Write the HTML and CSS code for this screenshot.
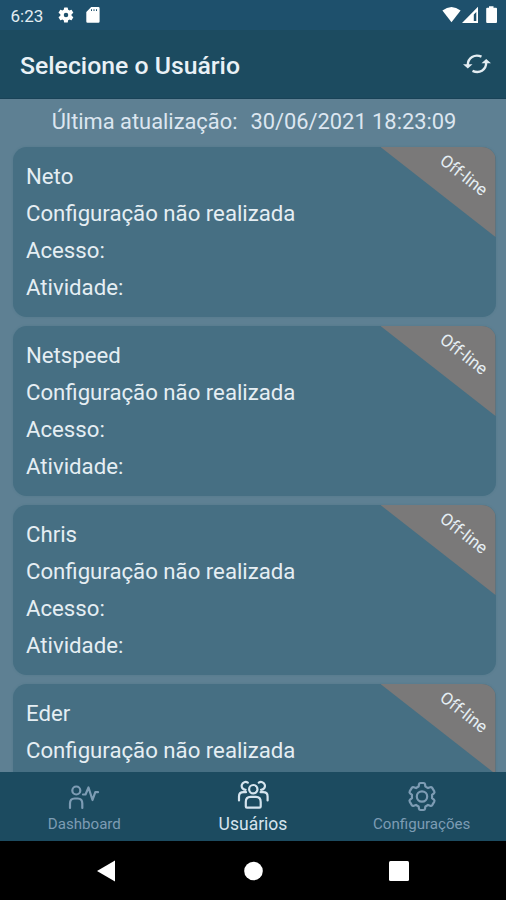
FILE: index.html
```html
<!DOCTYPE html>
<html lang="pt-BR">
<head>
<meta charset="utf-8">
<title>Selecione o Usuário</title>
<link rel="stylesheet" href="styles.css">
</head>
<body>
<div class="screen">
  <div class="status">
    <span class="clock">6:23</span>
    <svg class="status-gear" width="18" height="18" viewBox="0 0 24 24"><path fill="#fff" fill-rule="evenodd" d="M19.400 13a7.500 7.500 0 0 0 0-2l2.100-1.600a.5.5 0 0 0 .1-.7l-2-3.400a.5.5 0 0 0-.6-.2l-2.500 1a7.300 7.300 0 0 0-1.700-1l-.4-2.600a.5.5 0 0 0-.5-.5h-4a.5.5 0 0 0-.5.5L9 5.100a7.300 7.300 0 0 0-1.700 1l-2.500-1a.5.5 0 0 0-.6.2l-2 3.400a.5.5 0 0 0 .1.700L4.500 11a7.500 7.500 0 0 0 0 2l-2.200 1.600a.5.5 0 0 0-.1.700l2 3.400a.5.5 0 0 0 .6.200l2.500-1a7.300 7.300 0 0 0 1.700 1l.4 2.600c0 .3.2.5.500.5h4c.3 0 .5-.2.500-.5l.4-2.600a7.300 7.300 0 0 0 1.700-1l2.500 1a.5.5 0 0 0 .6-.2l2-3.400a.5.5 0 0 0-.1-.7zM12 15a3 3 0 1 1 0-6 3 3 0 0 1 0 6z"/></svg>
    <svg class="sd" width="14" height="16" viewBox="0 0 14 16"><path fill="#fff" fill-rule="evenodd" d="M5.200 0H12.400Q13.600 0 13.600 1.200V14.500Q13.600 15.700 12.400 15.700H1.500Q.3 15.700 .3 14.500V5zM5 2.200V4H6V2.200zM7.500 2.200V4H8.500V2.200zM10 2.200V4H11V2.200z"/></svg>
    <svg class="signals" width="56" height="18" viewBox="0 0 56 18"><path fill="#fff" d="M.4 4.500Q9.500-2.500 18.600 4.500L9.500 16.200z"/><path fill="#fff" fill-rule="evenodd" d="M36 .8V17H20zM34.300 6V15H31.800V8.500z"/><path fill="#fff" d="M47 .3h4.500v1.500H54q1 0 1 1V16q0 1-1 1h-8.800q-1 0-1-1V2.800q0-1 1-1H47z"/></svg>
  </div>
  <header class="appbar">
    <h1>Selecione o Usuário</h1>
    <svg width="28" height="20" viewBox="0 0 28 20"><g fill="none" stroke="#e3edf2" stroke-width="2.400"><path d="M4.800 11C4.800 4 11.500-.5 18.500 2.700"/><path d="M23.200 8.500C23.200 16 16.500 20 9.500 16.800"/></g><path fill="#e3edf2" d="M0 10.200H9.500L4.800 14.600zM18.500 9.300H28L23.200 4.900z"/></svg>
  </header>
  <main>
    <div class="updated"><span>Última atualização:</span><span>30/06/2021 18:23:09</span></div>
    <section class="card"><div class="ribbon"><span>Off-line</span></div><p>Neto</p><p>Configuração não realizada</p><p>Acesso:</p><p>Atividade:</p></section>
    <section class="card"><div class="ribbon"><span>Off-line</span></div><p>Netspeed</p><p>Configuração não realizada</p><p>Acesso:</p><p>Atividade:</p></section>
    <section class="card"><div class="ribbon"><span>Off-line</span></div><p>Chris</p><p>Configuração não realizada</p><p>Acesso:</p><p>Atividade:</p></section>
    <section class="card"><div class="ribbon"><span>Off-line</span></div><p>Eder</p><p>Configuração não realizada</p><p>Acesso:</p><p>Atividade:</p></section>
  </main>
  <nav class="tabs">
    <div class="tab">
      <svg width="32" height="32" viewBox="0 0 32 32" fill="none" stroke="currentColor" stroke-width="2.200" stroke-linecap="round" stroke-linejoin="round"><circle cx="8.300" cy="10.500" r="4"/><path d="M2 28V23.500Q2 18.500 6.500 18.500H9.800Q14.300 18.500 14.300 23.500V28M15 14.500H17.500L20.500 7.500L24.500 20L27.300 12.200H30"/></svg>
      <span>Dashboard</span>
    </div>
    <div class="tab active">
      <svg width="32" height="32" viewBox="0 0 32 32" fill="none" stroke="currentColor" stroke-width="2.200" stroke-linecap="round" stroke-linejoin="round"><circle cx="16.300" cy="9.200" r="4.200"/><path d="M8.800 26.500V22Q8.800 16.800 13.500 16.800H19Q23.700 16.800 23.700 22V26.500Q23.700 27.700 22.500 27.700H10Q8.800 27.700 8.800 26.500zM10.800 2.700A3.900 3.900 0 1 0 8.600 9.800M21.800 2.700A3.900 3.900 0 1 1 24 9.800M2 20.500V16.500Q2 12.200 6.500 12.200H9M30.600 20.500V16.500Q30.600 12.200 26.100 12.200H23.600"/></svg>
      <span>Usuários</span>
    </div>
    <div class="tab">
      <svg width="32" height="32" viewBox="0 0 32 32" fill="none" stroke="currentColor" stroke-width="2.200" stroke-linejoin="round"><circle cx="16" cy="16.500" r="5.200"/><path d="M14.400 3H17.600Q18.800 3 19 4.200L19.400 6.500Q20.700 7.500 22 8.100L24.200 7.200Q25.500 6.800 26.200 7.900L28.300 11.400Q28.900 12.600 27.900 13.400L26 14.900Q26.200 16.500 26 18.100L27.900 19.600Q28.900 20.400 28.300 21.600L26.200 25.100Q25.500 26.200 24.200 25.800L22 24.900Q20.700 25.900 19.400 26.500L19 28.800Q18.800 30 17.600 30H14.400Q13.200 30 13 28.800L12.600 26.500Q11.300 25.900 10 24.900L7.800 25.800Q6.500 26.200 5.800 25.100L3.700 21.600Q3.100 20.400 4.100 19.600L6 18.100Q5.800 16.500 6 14.900L4.100 13.400Q3.100 12.600 3.700 11.400L5.800 7.900Q6.500 6.800 7.800 7.200L10 8.100Q11.300 7.100 12.600 6.500L13 4.200Q13.200 3 14.400 3z"/></svg>
      <span>Configurações</span>
    </div>
  </nav>
  <div class="sysnav">
    <svg width="20" height="22" viewBox="0 0 20 22"><path fill="#fff" d="M19 .5V21.500L1 11z"/></svg>
    <svg width="20" height="20" viewBox="0 0 20 20"><circle cx="10.500" cy="10" r="9.300" fill="#fff"/></svg>
    <svg width="20" height="20" viewBox="0 0 20 20"><rect width="20" height="20" rx="1.500" fill="#fff"/></svg>
  </div>
</div>
</body>
</html>
```

FILE: styles.css
```css
* { box-sizing: border-box; }
body { margin: 0; font-family: Roboto, "Liberation Sans", sans-serif; }
h1, p { margin: 0; }
svg { display: block; flex: none; }
.screen { width: 506px; height: 900px; display: flex; flex-direction: column; overflow: hidden; background: #5e8093; }
.status { flex: none; height: 30px; display: flex; align-items: center; padding: 0 8px 0 10.500px; background: #1e506c; color: #e3edf2; }
.clock { font-size: 17px; line-height: 30px; width: 46.500px; padding-top: 2px; }
.sd { margin-left: 11px; }
.signals { margin-left: auto; }
.appbar { flex: none; height: 69px; display: flex; align-items: center; justify-content: space-between; padding: 0 15px 0 20px; background: #1c4b60; border-bottom: 1px solid #194257; }
.appbar h1 { font-size: 24.800px; font-weight: 500; line-height: 34px; color: #e9f1f6; padding-top: 4px; white-space: nowrap; }
main { flex: none; height: 673px; overflow: hidden; display: flex; flex-direction: column; gap: 9px; padding: 0 10.500px 0 12.500px; }
.updated { flex: none; height: 39px; display: flex; justify-content: center; gap: 13px; font-size: 21.850px; line-height: 45px; color: #dce6f0; white-space: nowrap; }
.card { position: relative; flex: none; height: 170px; padding: 10.500px 13.500px; border-radius: 14px; background: #466f83; box-shadow: 0 0 2px #466f8380; color: #e5eef3; font-size: 22.200px; line-height: 37px; overflow: hidden; white-space: nowrap; }
.ribbon { position: absolute; top: 0; right: 0; width: 115px; height: 90px; background: #7a7979; clip-path: polygon(0 0, 100% 0, 100% 100%); }
.ribbon span { position: absolute; left: 54px; top: 17px; width: 58px; line-height: 22px; font-size: 17px; text-align: center; transform: rotate(38deg); }
.tabs { flex: none; height: 69px; display: grid; grid-template-columns: repeat(3, 1fr); background: #1c4b60; }
.tab { display: flex; flex-direction: column; align-items: center; padding-top: 8px; color: #7d9cb4; font-size: 15.100px; line-height: 24px; }
.tab.active { color: #d5e4ee; font-size: 17.500px; }
.sysnav { flex: 1; display: flex; align-items: center; justify-content: space-between; padding: 0 97px 0 96px; background: #000; }
```
